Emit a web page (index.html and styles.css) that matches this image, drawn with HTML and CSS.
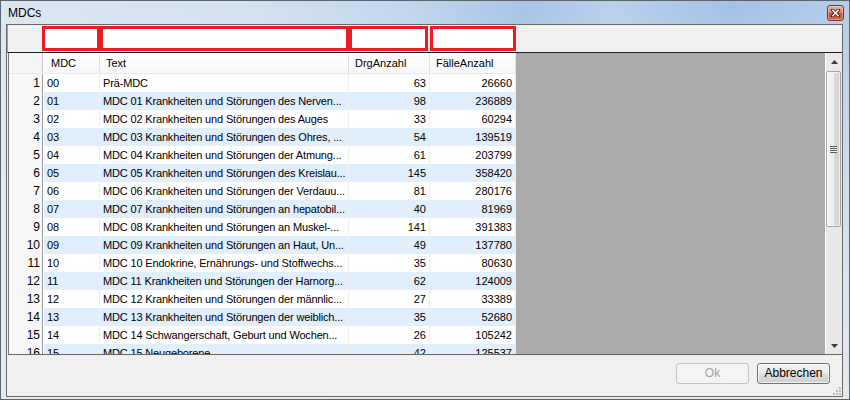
FILE: index.html
```html
<!DOCTYPE html>
<html lang="de">
<head>
<meta charset="utf-8">
<title>MDCs</title>
<link rel="stylesheet" href="styles.css">
</head>
<body>
<div class="window">
  <div class="titlebar">
    <span class="title">MDCs</span>
    <div class="close">
      <svg width="9" height="8" viewBox="0 0 9 8"><path d="M1 0.5 L8 7.5 M8 0.5 L1 7.5" stroke="#4a1a14" stroke-width="3.2" stroke-linecap="square"/><path d="M1.3 0.8 L7.7 7.2 M7.7 0.8 L1.3 7.2" stroke="#ffffff" stroke-width="1.6"/></svg>
    </div>
  </div>
  <div class="client">
    <div class="filterbar">
      <div class="fbox w1"></div>
      <div class="fbox w2"></div>
      <div class="fbox w3"></div>
      <div class="fbox w4"></div>
    </div>
    <div class="gridarea">
      <div class="grid">
        <div class="row head">
          <div class="rh"></div>
          <div class="c c1">MDC</div>
          <div class="c c2">Text</div>
          <div class="c c3">DrgAnzahl</div>
          <div class="c c4">FälleAnzahl</div>
        </div>
        <div class="row"><div class="rh">1</div><div class="c c1">00</div><div class="c c2">Prä-MDC</div><div class="c c3 n">63</div><div class="c c4 n">26660</div></div>
        <div class="row alt"><div class="rh">2</div><div class="c c1">01</div><div class="c c2">MDC 01 Krankheiten und Störungen des Nerven...</div><div class="c c3 n">98</div><div class="c c4 n">236889</div></div>
        <div class="row"><div class="rh">3</div><div class="c c1">02</div><div class="c c2">MDC 02 Krankheiten und Störungen des Auges</div><div class="c c3 n">33</div><div class="c c4 n">60294</div></div>
        <div class="row alt"><div class="rh">4</div><div class="c c1">03</div><div class="c c2">MDC 03 Krankheiten und Störungen des Ohres, ...</div><div class="c c3 n">54</div><div class="c c4 n">139519</div></div>
        <div class="row"><div class="rh">5</div><div class="c c1">04</div><div class="c c2">MDC 04 Krankheiten und Störungen der Atmung...</div><div class="c c3 n">61</div><div class="c c4 n">203799</div></div>
        <div class="row alt"><div class="rh">6</div><div class="c c1">05</div><div class="c c2">MDC 05 Krankheiten und Störungen des Kreislau...</div><div class="c c3 n">145</div><div class="c c4 n">358420</div></div>
        <div class="row"><div class="rh">7</div><div class="c c1">06</div><div class="c c2">MDC 06 Krankheiten und Störungen der Verdauu...</div><div class="c c3 n">81</div><div class="c c4 n">280176</div></div>
        <div class="row alt"><div class="rh">8</div><div class="c c1">07</div><div class="c c2">MDC 07 Krankheiten und Störungen an hepatobil...</div><div class="c c3 n">40</div><div class="c c4 n">81969</div></div>
        <div class="row"><div class="rh">9</div><div class="c c1">08</div><div class="c c2">MDC 08 Krankheiten und Störungen an Muskel-...</div><div class="c c3 n">141</div><div class="c c4 n">391383</div></div>
        <div class="row alt"><div class="rh">10</div><div class="c c1">09</div><div class="c c2">MDC 09 Krankheiten und Störungen an Haut, Un...</div><div class="c c3 n">49</div><div class="c c4 n">137780</div></div>
        <div class="row"><div class="rh">11</div><div class="c c1">10</div><div class="c c2">MDC 10 Endokrine, Ernährungs- und Stoffwechs...</div><div class="c c3 n">35</div><div class="c c4 n">80630</div></div>
        <div class="row alt"><div class="rh">12</div><div class="c c1">11</div><div class="c c2">MDC 11 Krankheiten und Störungen der Harnorg...</div><div class="c c3 n">62</div><div class="c c4 n">124009</div></div>
        <div class="row"><div class="rh">13</div><div class="c c1">12</div><div class="c c2">MDC 12 Krankheiten und Störungen der männlic...</div><div class="c c3 n">27</div><div class="c c4 n">33389</div></div>
        <div class="row alt"><div class="rh">14</div><div class="c c1">13</div><div class="c c2">MDC 13 Krankheiten und Störungen der weiblich...</div><div class="c c3 n">35</div><div class="c c4 n">52680</div></div>
        <div class="row"><div class="rh">15</div><div class="c c1">14</div><div class="c c2">MDC 14 Schwangerschaft, Geburt und Wochen...</div><div class="c c3 n">26</div><div class="c c4 n">105242</div></div>
        <div class="row alt"><div class="rh">16</div><div class="c c1">15</div><div class="c c2">MDC 15 Neugeborene</div><div class="c c3 n">42</div><div class="c c4 n">125537</div></div>
      </div>
      <div class="empty"></div>
      <div class="vscroll">
        <div class="arrow"><svg width="7" height="4" viewBox="0 0 7 4"><path d="M3.5 0 L7 4 L0 4 Z" fill="#3c3c3c"/></svg></div>
        <div class="thumb"><div class="grip"></div></div>
        <div class="track"></div>
        <div class="arrow"><svg width="7" height="4" viewBox="0 0 7 4"><path d="M0 0 L7 0 L3.5 4 Z" fill="#3c3c3c"/></svg></div>
      </div>
    </div>
    <div class="footer">
      <div class="btn disabled">Ok</div>
      <div class="btn">Abbrechen</div>
      <svg class="sizegrip" width="8" height="8" viewBox="0 0 8 8">
        <g fill="#b8b8b8"><rect x="6" y="0" width="2" height="2"/><rect x="3" y="3" width="2" height="2"/><rect x="6" y="3" width="2" height="2"/><rect x="0" y="6" width="2" height="2"/><rect x="3" y="6" width="2" height="2"/><rect x="6" y="6" width="2" height="2"/></g>
      </svg>
    </div>
  </div>
</div>
</body>
</html>
```

FILE: styles.css
```css
* {
  box-sizing: border-box;
  margin: 0;
  padding: 0;
}

html, body {
  width: 850px;
  height: 400px;
  overflow: hidden;
}

body {
  font-family: "Liberation Sans", Arial, sans-serif;
  font-size: 11px;
  color: #000;
  background: #ffffff;
}

.window {
  width: 850px;
  height: 400px;
  border: 1px solid #5b6673;
  display: flex;
  flex-direction: column;
  background:
    linear-gradient(to bottom, rgba(255,255,255,0) 0, rgba(235,238,242,0.55) 200px, rgba(232,234,236,0.95) 100%),
    linear-gradient(to right, #dbe6f2 0%, #d3e1f0 30%, #c0d5eb 48%, #a6c4e5 62%, #b8d0ea 72%, #a2c2e4 86%, #b4cde9 100%);
}

.titlebar {
  height: 23px;
  flex: none;
  display: flex;
  align-items: flex-start;
  justify-content: space-between;
  padding: 0 5px 0 7px;
}

.title {
  font-size: 12px;
  line-height: 12px;
  margin-top: 6px;
  color: #000;
}

.close {
  width: 17px;
  height: 16px;
  margin-top: 4px;
  border: 1px solid #7a3328;
  border-radius: 3px;
  background: linear-gradient(to bottom, #e9b2a4 0%, #d98670 45%, #c5503a 55%, #cf6a52 100%);
  box-shadow: inset 0 0 0 1px rgba(255,255,255,0.35);
  display: flex;
  align-items: center;
  justify-content: center;
}

.client {
  margin: 0 6px 2px 5px;
  height: 373px;
  border: 1px solid #6a6a6a;
  background: #f0f0f0;
  display: flex;
  flex-direction: column;
}

.filterbar {
  height: 28px;
  flex: none;
  border-bottom: 1px solid #1e1e1e;
  border-left: 1px solid #a0a0a0;
  display: flex;
  align-items: flex-start;
  padding: 1px 0 0 34px;
}

.fbox {
  height: 25px;
  border: 3px solid #ec1c24;
  background: #ffffff;
}

.w1 { width: 58px; }
.w2 { width: 249px; }
.w3 { width: 79px; }
.w4 { width: 86px; margin-left: 2px; }

.gridarea {
  height: 302px;
  flex: none;
  margin-left: 1px;
  border-left: 1px solid #7a7a7a;
  border-bottom: 1px solid #646464;
  display: flex;
  overflow: hidden;
}

.grid {
  width: 507px;
  flex: none;
  background: #ffffff;
  overflow: hidden;
}

.row {
  display: flex;
  height: 18px;
  background: #ffffff;
}

.row.alt {
  background: #e1eefb;
}

.row.head {
  height: 21px;
  background: linear-gradient(to bottom, #ffffff 0%, #f7f8fa 100%);
  border-bottom: 1px solid #e9e9e9;
}

.rh {
  width: 34px;
  flex: none;
  background: #f7f7f7;
  border-right: 1px solid #9c9c9c;
  text-align: right;
  padding-right: 2px;
  line-height: 18px;
  font-size: 12px;
}

.row.head .rh {
  background: #f5f5f5;
  border-right: 1px solid #c8c8c8;
}

.c {
  flex: none;
  height: 100%;
  line-height: 18px;
  padding-left: 3px;
  border-right: 1px solid #eeeeee;
  white-space: nowrap;
  overflow: hidden;
}

.c1 { width: 57px; border-left: 1px solid #ffffff; padding-left: 3px; }
.c2 { width: 249px; letter-spacing: -0.16px; }
.c3 { width: 81px; }
.c4 { width: 86px; }

.c.n {
  text-align: right;
  padding-left: 0;
  padding-right: 3px;
}

.row.head .c {
  line-height: 21px;
  padding-left: 6px;
  letter-spacing: 0;
  border-right: 1px solid #e3e3e3;
}

.row.head .c1 { padding-left: 7px; }

.empty {
  flex: 1;
  background: #ababab;
}

.vscroll {
  width: 17px;
  flex: none;
  background: #e9e9e9;
  border-left: 1px solid #ffffff;
  display: flex;
  flex-direction: column;
}

.arrow {
  height: 17px;
  flex: none;
  display: flex;
  align-items: center;
  justify-content: center;
}

.thumb {
  height: 156px;
  flex: none;
  margin: 1px 1px 0 0;
  border: 1px solid #a4a4a4;
  border-radius: 2px;
  background: linear-gradient(to right, #f6f6f6 0%, #ececec 50%, #dcdcdc 51%, #d0d0d0 100%);
  box-shadow: inset 0 0 0 1px rgba(255,255,255,0.6);
  display: flex;
  align-items: center;
  justify-content: center;
}

.grip {
  width: 7px;
  height: 7px;
  background: repeating-linear-gradient(to bottom, #5a5a5a 0, #5a5a5a 1px, #f4f4f4 1px, #f4f4f4 2px);
  margin-top: 1px;
}

.track {
  flex: 1;
}

.footer {
  flex: 1;
  position: relative;
  display: flex;
  justify-content: flex-end;
  align-items: flex-start;
  gap: 8px;
  padding: 8px 12px 0 0;
}

.btn {
  width: 73px;
  height: 21px;
  border: 1px solid #707070;
  border-radius: 3px;
  background: linear-gradient(to bottom, #f3f3f3 0%, #ebebeb 48%, #dddddd 52%, #cfcfcf 100%);
  box-shadow: inset 0 0 0 1px rgba(255,255,255,0.7);
  font-size: 12px;
  line-height: 19px;
  text-align: center;
  color: #000;
}

.btn.disabled {
  border-color: #c4c4c4;
  background: #f4f4f4;
  box-shadow: none;
  color: #a3a3a3;
}

.sizegrip {
  position: absolute;
  right: 1px;
  bottom: 1px;
}
```
